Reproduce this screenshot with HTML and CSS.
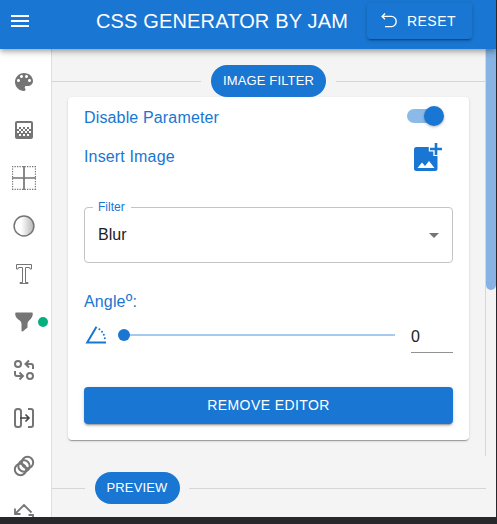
FILE: index.html
```html
<!DOCTYPE html>
<html lang="en">
<head>
<meta charset="utf-8">
<title>CSS Generator by Jam</title>
<link rel="stylesheet" href="styles.css">
</head>
<body>
<div class="app">
  <header class="bar">
    <svg class="menu" width="24" height="24" viewBox="0 0 24 24"><path fill="currentColor" d="M3 18h18v-2H3v2zm0-5h18v-2H3v2zm0-7v2h18V6H3z"/></svg>
    <h1 class="title">CSS GENERATOR BY JAM</h1>
    <button class="reset">
      <svg width="18" height="18" viewBox="0 0 18 18" fill="none" stroke="currentColor" stroke-width="1.35"><path d="M5 1.500 2.100 4.400 5 7.300M2.100 4.400H11.500a4.700 5.100 0 0 1 0 10.200H5"/></svg>
      <span>RESET</span>
    </button>
  </header>
  <div class="main">
    <nav class="side">
      <a class="item"><svg viewBox="0 0 24 24"><path fill="currentColor" d="M12 3c-4.970 0-9 4.030-9 9s4.030 9 9 9c.83 0 1.500-.67 1.500-1.500 0-.39-.15-.74-.39-1.010-.23-.26-.38-.61-.38-.99 0-.83.67-1.500 1.500-1.500H16c2.760 0 5-2.240 5-5 0-4.420-4.030-8-9-8zm-5.500 9c-.83 0-1.500-.67-1.500-1.500S5.670 9 6.500 9 8 9.670 8 10.500 7.330 12 6.500 12zm3-4C8.670 8 8 7.330 8 6.500S8.670 5 9.500 5s1.500.67 1.500 1.500S10.330 8 9.500 8zm5 0c-.83 0-1.500-.67-1.500-1.500S13.670 5 14.500 5s1.500.67 1.500 1.500S15.330 8 14.500 8zm3 4c-.83 0-1.500-.67-1.500-1.500S16.670 9 17.500 9s1.500.67 1.500 1.500-.67 1.500-1.500 1.500z"/></svg></a>
      <a class="item"><svg viewBox="0 0 24 24"><path fill="currentColor" d="M11 9h2v2h-2zm-2 2h2v2H9zm4 0h2v2h-2zm2-2h2v2h-2zM7 9h2v2H7zm12-6H5c-1.100 0-2 .9-2 2v14c0 1.100.9 2 2 2h14c1.100 0 2-.9 2-2V5c0-1.100-.9-2-2-2zM9 18H7v-2h2v2zm4 0h-2v-2h2v2zm4 0h-2v-2h2v2zm2-7h-2v2h2v2h-2v-2h-2v2h-2v-2h-2v2H9v-2H7v2H5v-2h2v-2H5V5h14v6z"/></svg></a>
      <a class="item"><svg viewBox="0 0 24 24" fill="none" stroke="currentColor"><path stroke-width="1.300" stroke-dasharray="1.300 1.200" d="M.5 0v24M23.500 0v24M0 .5h24M0 23.500h24"/><path stroke-width="1.700" d="M12 0v24M0 12h24"/></svg></a>
      <a class="item"><svg viewBox="0 0 24 24"><defs><linearGradient id="shade"><stop offset=".35" stop-color="#fff"/><stop offset="1" stop-color="#b5b5b5"/></linearGradient></defs><circle cx="12" cy="12" r="9.900" fill="url(#shade)" stroke="currentColor" stroke-width="1.500"/></svg></a>
      <a class="item"><svg viewBox="0 0 24 24" fill="none" stroke="currentColor" stroke-width="1"><path d="M4.500 2.500h15v4.500h-1.500l-.5-1.500h-4v15h2.500v1H8v-1h2.500v-15h-4L6 7H4.500z"/></svg></a>
      <a class="item"><svg viewBox="0 0 24 24"><path fill="currentColor" d="M4.500 2.500h15c1 0 1.300.5 1.300 1.200 0 3.300-2 5-3.600 6.800-1.100 1.200-1.700 2-1.700 3.500v3.500l-4.500 3.800c-.7.5-1.500.2-1.500-.6V14c0-1.500-.6-2.300-1.700-3.500C5.200 8.700 3.200 7 3.200 3.700c0-.7.300-1.200 1.300-1.200z"/></svg><i class="dot"></i></a>
      <a class="item"><svg viewBox="0 0 24 24" fill="none" stroke="currentColor" stroke-width="2"><circle cx="6" cy="6" r="3"/><circle cx="18" cy="18" r="3"/><path d="M17 2.500 13.500 6 17 9.500M14 6h5q2 0 2 2v3M3 13v3q0 2 2 2h5M7.500 14.500 11 18l-3.500 3.500"/></svg></a>
      <a class="item"><svg viewBox="0 0 24 24" fill="none" stroke="currentColor" stroke-width="2"><rect x="3" y="3" width="6" height="18" rx="2.500"/><path d="M16 3h3q2 0 2 2v14q0 2-2 2h-3"/><path stroke="#444" stroke-width="1.600" d="M8 12h9M13.500 8.500 17 12l-3.500 3.500"/></svg></a>
      <a class="item"><svg viewBox="0 0 24 24" fill="none" stroke="currentColor" stroke-width="2"><circle cx="8.500" cy="15.500" r="5.700"/><circle cx="12" cy="12" r="5.700"/><circle cx="15.500" cy="8.500" r="5.700"/></svg></a>
      <a class="item"><svg viewBox="0 0 24 24" fill="none" stroke="currentColor" stroke-width="1.800"><path d="M19.500 10.500 12 3 4 11M3 6.500V12h5.500M16.500 13H21v7"/></svg></a>
    </nav>
    <main class="content">
      <div class="scroll">
        <div class="divider"><span class="chip filter">IMAGE FILTER</span></div>
        <section class="card">
          <div class="row"><span class="label">Disable Parameter</span><span class="switch"></span></div>
          <div class="row image"><span class="label">Insert Image</span>
            <svg width="32" height="32" viewBox="0 0 32 32" fill="currentColor"><path d="M5.500 5H17.800V9.500h4.500V14h4.200V26.500a2.500 2.500 0 0 1-2.500 2.500H5.500A2.500 2.500 0 0 1 3 26.500V7.500a2.500 2.500 0 0 1 2.500-2.500zM6.500 26h17l-5.500-7-4 5-3-3.500z"/><path d="M23.700 1h2.600v4.700H31v2.600h-4.700V13h-2.600V8.300H19V5.700h4.700z"/></svg>
          </div>
          <fieldset class="select"><legend>Filter</legend><span>Blur</span><i class="caret"></i></fieldset>
          <div class="angle label">Angle<span class="deg">º</span>:</div>
          <div class="slider">
            <svg width="24" height="24" viewBox="0 0 24 24" fill="none" stroke="currentColor"><path stroke-width="2" d="M12.500 3.800 3.200 19.400H22"/><path stroke-width="2" stroke-linecap="round" stroke-dasharray="0 3.600" d="M15.400 6.200Q20.500 10 21 17"/></svg>
            <div class="rail"><i class="thumb"></i></div>
            <div class="value">0</div>
          </div>
          <button class="remove">REMOVE EDITOR</button>
        </section>
      </div>
      <div class="divider second"><span class="chip preview">PREVIEW</span></div>
    </main>
    <div class="track"><i class="grip"></i></div>
  </div>
</div>
</body>
</html>
```
FILE: styles.css
```css
* { box-sizing: border-box; }
body {
  margin: 0;
  height: 524px;
  overflow: hidden;
  background: #27282c;
  font: 16px/24px "Liberation Sans", Arial, sans-serif;
  color: #1976d2;
}
button { border: 0; font-family: inherit; padding: 0; color: #fff; background: #1976d2; }
.app { width: 496px; height: 517px; display: flex; flex-direction: column; overflow: hidden; background: #f4f4f4; }
.bar {
  flex: 0 0 49px;
  display: flex;
  align-items: flex-start;
  position: relative;
  z-index: 2;
  background: #1976d2;
  color: #fff;
  padding: 3px 24px 0 8px;
  box-shadow: 0 2px 4px -1px rgba(0,0,0,.2), 0 4px 5px rgba(0,0,0,.14), 0 1px 10px rgba(0,0,0,.12);
}
.menu { margin-top: 6px; }
.title { margin: 2px 0 0 64px; width: 271px; font-size: 20px; font-weight: 400; line-height: 32px; letter-spacing: .15px; white-space: nowrap; }
.reset {
  width: 105px; height: 36px;
  display: flex; align-items: center;
  padding-left: 13px; gap: 9px;
  border-radius: 4px;
  font-size: 14px; letter-spacing: .45px;
  box-shadow: 0 3px 1px -2px rgba(0,0,0,.2), 0 2px 2px rgba(0,0,0,.14), 0 1px 5px rgba(0,0,0,.12);
}
.main { flex: 1; display: flex; min-height: 0; }
.side { flex: 0 0 52px; padding-top: 9px; background: #fff; border-right: 1px solid #dedede; color: #757575; }
.item { display: flex; align-items: center; height: 48px; padding-left: 12px; position: relative; }
.item svg { width: 24px; height: 24px; }
.dot { position: absolute; left: 38px; top: 19px; width: 10px; height: 10px; border-radius: 50%; background: #05b080; }
.content { width: 434px; }
.scroll { height: 407px; padding-top: 16px; border-right: 1px solid #d8d8d8; }
.divider { display: flex; align-items: center; gap: 10px; height: 32px; }
.divider::before, .divider::after { content: ""; flex: 1; height: 1px; background: #d6d6d6; }
.chip { height: 32px; border-radius: 16px; background: #1976d2; color: #fff; font-size: 13px; line-height: 32px; letter-spacing: .15px; text-align: center; white-space: nowrap; }
.chip.filter { width: 115px; }
.chip.preview { width: 85px; padding-right: 1px; line-height: 31px; }
.second { margin-top: 16px; width: 434px; }
.second::before { flex: 0 0 33px; }
.second::after { margin-left: -1px; }
.card {
  width: 401px; height: 343px; margin-left: 16px; padding: 8px 16px 0;
  border-radius: 4px; background: #fff;
  box-shadow: 0 2px 1px -1px rgba(0,0,0,.2), 0 1px 1px rgba(0,0,0,.14), 0 1px 3px rgba(0,0,0,.12);
}
.label { letter-spacing: .15px; }
.row { display: flex; justify-content: space-between; height: 24px; }
.row .label { padding-top: 1px; }
.switch { width: 34px; height: 14px; margin: 4px 12px 0 0; border-radius: 7px; background: #8cbae8; position: relative; }
.switch::after { content: ""; position: absolute; left: 17px; top: -3px; width: 20px; height: 20px; border-radius: 50%; background: #1976d2; box-shadow: 0 1px 3px rgba(0,0,0,.3); }
.image { margin-top: 15px; }
.image svg { margin: -2px 10px 0 0; }
.select {
  height: 64px; margin: 31px 0 0; padding: 0 14px 0 8px;
  border: 1px solid #c4c4c4; border-radius: 4px; min-width: 0;
  display: block; position: relative; color: #212121;
}
.select legend { height: 16px; padding: 0 6px 0 5px; font-size: 12px; line-height: 16px; color: #1976d2; }
.select > span { display: block; margin: 8px 0 0 5px; }
.caret { position: absolute; right: 13px; bottom: 24px; border: 5px solid transparent; border-top-color: #757575; border-bottom: 0; }
.angle { height: 24px; margin-top: 27px; }
.deg { font-size: 18px; line-height: 0; }
.slider { display: flex; align-items: center; height: 40px; margin-top: 1px; }
.rail { width: 271px; height: 2px; margin-left: 16px; background: #a6c9ed; position: relative; }
.thumb { position: absolute; left: -6px; top: -5px; width: 12px; height: 12px; border-radius: 50%; background: #1976d2; }
.value { width: 42px; height: 32px; margin: 4px 0 0 16px; line-height: 32px; color: #212121; border-bottom: 1px solid #919191; }
.remove {
  display: block; width: 369px; height: 37px; margin-top: 32px; padding-bottom: 2px; border-radius: 4px;
  font-size: 14px; letter-spacing: .4px;
  box-shadow: 0 3px 1px -2px rgba(0,0,0,.2), 0 2px 2px rgba(0,0,0,.14), 0 1px 5px rgba(0,0,0,.12);
}
.track { width: 10px; }
.grip { display: block; height: 241px; background: #86b3e3; border-radius: 0 0 5px 5px; }
```
